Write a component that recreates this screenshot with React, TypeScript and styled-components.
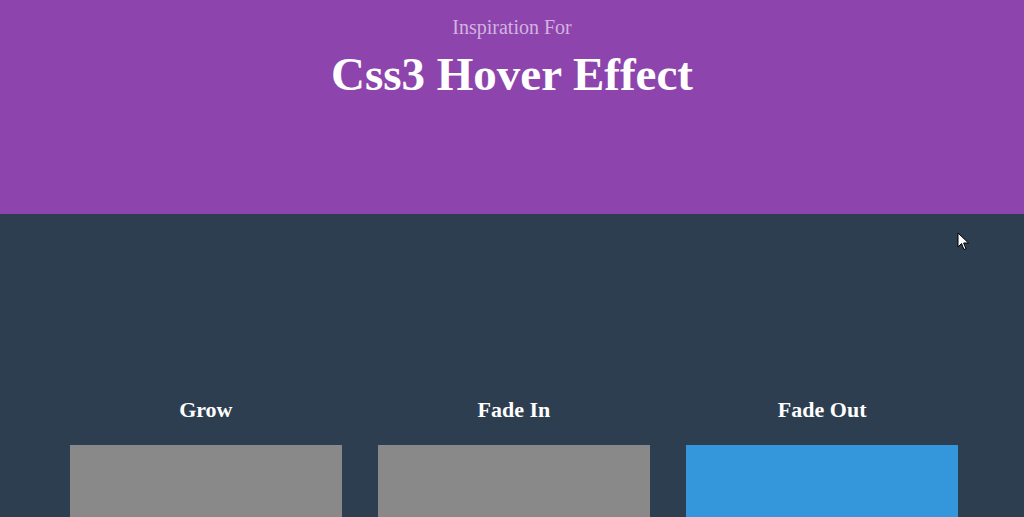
import React from "react";
import styled, { createGlobalStyle } from "styled-components";

type Effect = {
  title: string;
  color: string;
};

const effects: Effect[] = [
  { title: "Grow", color: "#898989" },
  { title: "Fade In", color: "#898989" },
  { title: "Fade Out", color: "#3497db" },
];

export default function App() {
  return (
    <>
      <GlobalStyle />
      <SPage>
        <SHeader>
          <SKicker>Inspiration For</SKicker>
          <STitle>Css3 Hover Effect</STitle>
        </SHeader>
        <SMain>
          <SGrid>
            {effects.map((effect) => (
              <SItem key={effect.title}>
                <SItemTitle>{effect.title}</SItemTitle>
                <SBox $color={effect.color} />
              </SItem>
            ))}
          </SGrid>
        </SMain>
        {/* mouse pointer */}
        <SCursor width="14" height="20" viewBox="0 0 14 20">
          <path
            d="M1 1 L1 15 L4.5 11.5 L7 17.5 L9 16.6 L6.6 11 L11.5 11 Z"
            fill="#ffffff"
            stroke="#000000"
            strokeWidth="1"
          />
        </SCursor>
      </SPage>
    </>
  );
}

const GlobalStyle = createGlobalStyle`
  html, body {
    margin: 0;
    padding: 0;
    background: #2d3e50;
    overflow: hidden;
  }
  body {
    font-family: "Liberation Serif", "DejaVu Serif", serif;
  }
`;

const SPage = styled.div`
  position: relative;
  width: 1024px;
  height: 517px;
  overflow: hidden;
`;

const SHeader = styled.header`
  height: 214px;
  background: #8e44ad;
  display: flex;
  flex-direction: column;
  align-items: center;
  padding-top: 16px;
  box-sizing: border-box;
`;

const SKicker = styled.div`
  font-size: 20px;
  color: #d2b3e0;
  line-height: 22px;
`;

const STitle = styled.h1`
  margin: 8px 0 0;
  font-size: 47px;
  line-height: 56px;
  font-weight: bold;
  color: #ffffff;
`;

const SMain = styled.main`
  background: #2d3e50;
  padding: 183px 66px 0 70px;
  height: 303px;
  box-sizing: border-box;
`;

const SGrid = styled.div`
  display: grid;
  grid-template-columns: repeat(3, 1fr);
  column-gap: 36.5px;
`;

const SItem = styled.div`
  display: flex;
  flex-direction: column;
  align-items: center;
`;

const SItemTitle = styled.h3`
  margin: 0;
  font-size: 22px;
  line-height: 26px;
  font-weight: bold;
  color: #ffffff;
`;

const SBox = styled.div<{ $color: string }>`
  margin-top: 22px;
  width: 100%;
  height: 120px;
  background: ${(p) => p.$color};
`;

const SCursor = styled.svg`
  position: absolute;
  left: 957px;
  top: 232px;
`;
